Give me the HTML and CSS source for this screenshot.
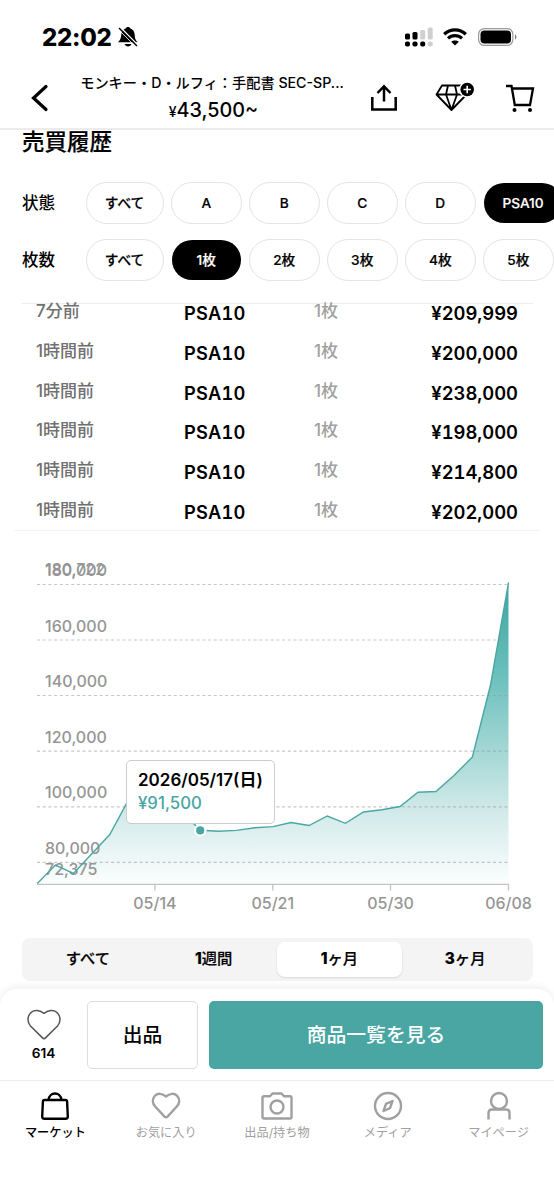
FILE: index.html
```
<!DOCTYPE html>
<html lang="ja">
<head>
    <meta charset="UTF-8">
    <meta name="viewport" content="width=device-width, initial-scale=1.0">
    <title>売買履歴</title>
    <link rel="stylesheet" href="styles.css">
</head>
<body>
    <!--Status bar-->
    <div class="status-bar">
        <span class="clock">22:02</span>
        <svg class="bell" width="22" height="22" viewBox="0 0 22 22">
            <path d="M1 16.200C3.500 14 4 12 4.300 8.500C4.600 5 6.400 3.100 8.600 2.400C9.300.4 12.700.4 13.400 2.400C16 3.200 17.600 5.500 17.700 9C17.800 12.500 18.500 14 20.500 16.200Z"/>
            <path d="M7.500 18H14.500C13.500 21.300 8.500 21.300 7.500 18Z"/>
            <path d="M3 1L21 19.300" stroke="#fff" stroke-width="1.400"/>
            <path d="M2 2L20 20" stroke="#000" stroke-width="1.400"/>
            <path d="M1 3L19 21" stroke="#fff" stroke-width="0.800"/>
        </svg>
        <svg class="signal" width="28" height="20" viewBox="0 0 28 20">
            <g fill="#000">
                <rect x="0" y="6.500" width="5" height="6" rx="1.500"/>
                <rect x="7.500" y="5" width="5" height="7.500" rx="1.500"/>
                <rect x="0" y="14.500" width="5" height="5" rx="1.800"/>
                <rect x="7.500" y="14.500" width="5" height="5" rx="1.800"/>
                <rect x="15.200" y="14.500" width="5" height="5" rx="1.800"/>
            </g>
            <g fill="#d0d0d0">
                <rect x="15.200" y="3" width="5" height="9.500" rx="1.500"/>
                <rect x="22.700" y="0.500" width="5" height="12" rx="1.500"/>
                <rect x="22.700" y="14.500" width="5" height="5" rx="1.800"/>
            </g>
        </svg>
        <svg class="wifi" width="24" height="18" viewBox="0 0 24 18" fill="none" stroke="#000">
            <path d="M1.200 6.200C7.200.4 16.800.4 22.800 6.200" stroke-width="3.300"/>
            <path d="M5 10.400C9 6.700 15 6.700 19 10.400" stroke-width="3.100"/>
            <path d="M12 17.600L8.200 13.800C10.200 12 13.800 12 15.800 13.800Z" fill="#000" stroke="none"/>
        </svg>
        <svg class="battery" width="40" height="18" viewBox="0 0 40 18">
            <rect x="0.600" y="0.600" width="34.300" height="16.800" rx="5.800" fill="none" stroke="#999" stroke-width="1.200"/>
            <rect x="2.500" y="2.500" width="30.500" height="13" rx="4" fill="#000"/>
            <path d="M37 6.500C39 7.500 39 10.500 37 11.500Z" fill="#777"/>
        </svg>
    </div>

    <!--Item header-->
    <header class="item-header">
        <svg class="back" width="20" height="30" viewBox="0 0 20 30" fill="none" stroke="#000" stroke-width="3.200" stroke-linecap="round">
            <path d="M16 4.500L3.500 16L16 27.500"/>
        </svg>
        <div class="item-title">
            <div class="item-name">モンキー・D・ルフィ：手配書 SEC-SP...</div>
            <div class="item-price"><span class="yen">¥</span>43,500~</div>
        </div>
        <svg class="share" width="28" height="28" viewBox="0 0 28 28" fill="none" stroke="#000" stroke-width="2.500">
            <path d="M2.300 14V26.500H25.700V14M14 18.500V4M7.500 10L14 3.300L20.500 10"/>
        </svg>
        <svg class="diamond" width="40" height="32" viewBox="0 0 40 32" fill="none" stroke="#000" stroke-width="1.800" stroke-linejoin="round">
            <path d="M7 4.500H26L31.500 13.500L16.500 29L1.500 13.500ZM2 13.500H31M13 4.500L11 13.500L16.500 29L22 13.500L20 4.500"/>
            <circle cx="32.200" cy="8.500" r="8.300" fill="#fff" stroke="none"/>
            <circle cx="32.200" cy="8.500" r="6.800" fill="#000" stroke="none"/>
            <path d="M32.200 4.800V12.200M28.500 8.500H35.900" stroke="#fff" stroke-width="1.600"/>
        </svg>
        <svg class="cart" width="30" height="30" viewBox="0 0 30 30" fill="none" stroke="#000" stroke-width="2.300">
            <path d="M1 4H6.500L9.800 23H25L28 6.500H7"/>
            <circle cx="9.500" cy="28" r="2" fill="#000" stroke="none"/>
            <circle cx="25" cy="28" r="2" fill="#000" stroke="none"/>
        </svg>
    </header>

    <main>
        <h2 class="section-title">売買履歴</h2>

        <!--Filters-->
        <div class="filter">
            <span class="filter-label">状態</span>
            <span class="chip chip-all">すべて</span>
            <span class="chip">A</span>
            <span class="chip">B</span>
            <span class="chip">C</span>
            <span class="chip">D</span>
            <span class="chip chip-psa selected">PSA10</span>
        </div>
        <div class="filter">
            <span class="filter-label">枚数</span>
            <span class="chip chip-all">すべて</span>
            <span class="chip chip-count selected">1枚</span>
            <span class="chip chip-count">2枚</span>
            <span class="chip chip-count">3枚</span>
            <span class="chip chip-count">4枚</span>
            <span class="chip chip-count">5枚</span>
        </div>

        <!--Sales history-->
        <div class="history">
            <div class="sale"><span class="time">7分前</span><span class="grade">PSA10</span><span class="count">1枚</span><span class="price">¥209,999</span></div>
            <div class="sale"><span class="time">1時間前</span><span class="grade">PSA10</span><span class="count">1枚</span><span class="price">¥200,000</span></div>
            <div class="sale"><span class="time">1時間前</span><span class="grade">PSA10</span><span class="count">1枚</span><span class="price">¥238,000</span></div>
            <div class="sale"><span class="time">1時間前</span><span class="grade">PSA10</span><span class="count">1枚</span><span class="price">¥198,000</span></div>
            <div class="sale"><span class="time">1時間前</span><span class="grade">PSA10</span><span class="count">1枚</span><span class="price">¥214,800</span></div>
            <div class="sale"><span class="time">1時間前</span><span class="grade">PSA10</span><span class="count">1枚</span><span class="price">¥202,000</span></div>
        </div>
        <div class="history-end"></div>

        <!--Price chart-->
        <div class="chart">
            <svg width="554" height="400" viewBox="0 531 554 400">
                <defs>
                    <linearGradient id="fade" x1="0" y1="0" x2="0" y2="1">
                        <stop offset="0" stop-color="#3da5a1"/>
                        <stop offset="0.300" stop-color="#69bfbb"/>
                        <stop offset="0.750" stop-color="#cfe9e8"/>
                        <stop offset="1" stop-color="#fcfefe"/>
                    </linearGradient>
                </defs>
                <path fill="url(#fade)" d="M37.300 883.500L55.400 865L73.500 873.500L91.600 854L109.800 834.500L127.900 801L146 780L164 785L182 812L200.400 830.300L218.500 831.200L236.600 830.400L254.800 827.700L273 826.600L291 822.500L309 825.500L327.300 816L345.400 823.300L363.500 812L382 809.700L400 806.500L418 792.300L436 791.500L454 775.500L472.400 757L490.500 685L508.500 582.500V884H37.300Z"/>
                <g class="grid">
                    <path d="M37 584.500H508M37 640H508M37 695.500H508M37 751.200H508M37 806.800H508M37 862.400H508"/>
                </g>
                <path class="axis" d="M37 884.300H509M154.900 884V890.500M272.800 884V890.500M390.500 884V890.500M508.500 884V890.500"/>
                <g class="y-label">
                    <text x="45" y="574.500">180,722</text>
                    <text x="45" y="576">180,000</text>
                    <text x="45" y="631.700">160,000</text>
                    <text x="45" y="687.200">140,000</text>
                    <text x="45" y="742.800">120,000</text>
                    <text x="45" y="798.400">100,000</text>
                    <text x="45" y="854">80,000</text>
                    <text x="45" y="875">72,375</text>
                </g>
                <g class="x-label">
                    <text x="154.900" y="909">05/14</text>
                    <text x="272.800" y="909">05/21</text>
                    <text x="390.500" y="909">05/30</text>
                    <text x="508.500" y="909">06/08</text>
                </g>
                <path class="line" d="M37.300 883.500L55.400 865L73.500 873.500L91.600 854L109.800 834.500L127.900 801L146 780L164 785L182 812L200.400 830.300L218.500 831.200L236.600 830.400L254.800 827.700L273 826.600L291 822.500L309 825.500L327.300 816L345.400 823.300L363.500 812L382 809.700L400 806.500L418 792.300L436 791.500L454 775.500L472.400 757L490.500 685L508.500 582.500"/>
                <circle cx="200.200" cy="830.400" r="5.200" fill="#4aa6a3" stroke="#fff" stroke-width="2.200"/>
            </svg>
            <div class="tooltip">
                <div class="tooltip-date">2026/05/17(日)</div>
                <div class="tooltip-price">¥91,500</div>
            </div>
        </div>

        <!--Period switch-->
        <div class="periods">
            <span class="period">すべて</span>
            <span class="period"><b>1</b>週間</span>
            <span class="period active"><b>1</b>ヶ月</span>
            <span class="period"><b>3</b>ヶ月</span>
        </div>
    </main>

    <!--Buy / sell bar-->
    <div class="action-bar">
        <div class="likes">
            <svg width="34" height="31" viewBox="0 0 34 31" fill="none" stroke="#555" stroke-width="1.500" stroke-linejoin="round">
                <path d="M17 4.300C12.500 1 6.800.2 3.500 4C.2 7.800.1 13.200 3.500 17L15.500 28.900Q17 30.300 18.500 28.900L30.500 17C33.900 13.200 33.800 7.800 30.500 4C27.200.2 21.500 1 17 4.300Z"/>
            </svg>
            <span>614</span>
        </div>
        <div class="sell-button">出品</div>
        <div class="list-button">商品一覧を見る</div>
    </div>

    <!--Tabs-->
    <nav class="tabs">
        <div class="tab current">
            <svg width="30" height="30" viewBox="0 0 30 30">
                <path d="M4.500 9H25.500Q27 9 27.100 10.500L27.800 25.500Q27.800 27.700 25.700 27.700H4.300Q2.200 27.700 2.200 25.500L2.900 10.500Q3 9 4.500 9ZM8.500 9C9.500 .4 20.500 .4 21.500 9"/>
            </svg>
            <span>マーケット</span>
        </div>
        <div class="tab">
            <svg width="30" height="30" viewBox="0 0 30 30">
                <path d="M15 5.500C11.500 2.500 6.500 1.600 3.700 5C1 8.300 1.300 12.500 4.200 15.500L13.500 25.600Q15 27 16.500 25.600L25.800 15.500C28.700 12.500 29 8.300 26.300 5C23.500 1.600 18.500 2.500 15 5.500Z"/>
            </svg>
            <span>お気に入り</span>
        </div>
        <div class="tab">
            <svg width="32" height="30" viewBox="0 0 32 30">
                <path d="M3 5.200H9L11.500 2.500H20.500L23 5.200H29Q30.500 5.200 30.500 6.700V26Q30.500 27.500 29 27.500H3Q1.500 27.500 1.500 26V6.700Q1.500 5.200 3 5.200Z"/>
                <circle cx="16" cy="16" r="6.500"/>
            </svg>
            <span>出品/持ち物</span>
        </div>
        <div class="tab">
            <svg width="30" height="30" viewBox="0 0 30 30">
                <circle cx="15" cy="15" r="13"/>
                <path d="M19.500 10L13 12.800L10.500 20L17 17.200Z"/>
            </svg>
            <span>メディア</span>
        </div>
        <div class="tab">
            <svg width="30" height="30" viewBox="0 0 30 30">
                <circle cx="15" cy="10" r="8"/>
                <path d="M4.500 28.500V22Q4.500 18.500 8 18.500H22Q25.500 18.500 25.500 22V28.500"/>
            </svg>
            <span>マイページ</span>
        </div>
    </nav>
</body>
</html>
```
FILE: styles.css
```
* {
    box-sizing: border-box;
}
body {
    margin: 0;
    width: 554px;
    height: 1200px;
    overflow: hidden;
    display: flex;
    flex-direction: column;
    background-color: #fff;
    color: #000;
    font-family: Inter, "Noto Sans CJK JP", sans-serif;
    font-optical-sizing: none;
}
svg {
    display: block;
    flex: none;
}
.status-bar {
    display: flex;
    align-items: center;
    height: 65px;
    padding: 10px 36px 0 42px;
}
.clock {
    width: 75px;
    font-size: 24px;
    font-weight: 800;
    letter-spacing: -0.3px;
    white-space: nowrap;
}
.signal {
    margin-left: auto;
}
.bell,
.signal,
.wifi,
.battery {
    margin-top: -1px;
}
.wifi {
    margin-left: 10px;
}
.battery {
    margin-left: 11px;
}
.item-header {
    display: flex;
    align-items: center;
    height: 65px;
    padding-left: 30px;
    border-bottom: 2px solid #ececec;
}
.item-title {
    width: 270px;
    margin-left: 27px;
    text-align: center;
    white-space: nowrap;
}
.item-name {
    height: 24px;
    line-height: 24px;
    font-size: 14.2px;
    font-weight: 500;
}
.item-price {
    height: 28px;
    padding-left: 3px;
    line-height: 30px;
    font-size: 19.8px;
    font-weight: 500;
}
.yen {
    font-size: 14px;
}
.share {
    margin-left: 23px;
}
.diamond {
    margin-left: 37px;
}
.cart {
    margin-left: 30px;
}
main {
    height: 859px;
}
.section-title {
    margin: 0;
    height: 52px;
    padding-left: 22px;
    line-height: 24px;
    font-size: 22.5px;
    font-weight: 500;
    -webkit-text-stroke: 0.2px;
}
.filter {
    display: flex;
    align-items: center;
    gap: 7.5px;
    height: 42px;
    margin-bottom: 15px;
    padding-left: 22px;
    overflow: hidden;
}
.filter-label {
    flex: none;
    width: 56px;
    padding-bottom: 2px;
    font-size: 16.5px;
    font-weight: 500;
}
.chip {
    flex: none;
    display: flex;
    align-items: center;
    justify-content: center;
    width: 70.5px;
    height: 42px;
    border: 1.5px solid #e4e4e4;
    border-radius: 21px;
    font-size: 13.7px;
    font-weight: 500;
    -webkit-text-stroke: 0.2px;
}
.chip-all {
    width: 78px;
    padding-bottom: 2px;
}
.chip-count {
    padding-bottom: 3px;
}
.chip-psa {
    width: 80px;
}
.selected {
    border-color: transparent;
    background-color: #000;
    background-clip: padding-box;
    color: #fff;
}
.history {
    height: 227px;
    margin: 22px 21px 0 22px;
    border-top: 1px solid #eee;
}
.sale {
    display: grid;
    grid-template-columns: 148px 130px 88px 1fr;
    height: 39.75px;
    padding: 0 15px 0 14px;
    line-height: 19px;
    white-space: nowrap;
}
.time {
    color: #707070;
    font-size: 17px;
    font-weight: 500;
    line-height: 15px;
}
.grade {
    font-size: 18.3px;
    font-weight: 600;
    letter-spacing: 0.2px;
    font-variant-numeric: tabular-nums;
}
.count {
    color: #a0a0a0;
    font-size: 17px;
    font-weight: 500;
    line-height: 15px;
}
.price {
    font-size: 18.4px;
    font-weight: 600;
    font-variant-numeric: tabular-nums;
    text-align: right;
}
.history-end {
    height: 1px;
    margin: 0 14px;
    background-color: #f3f3f3;
}
.chart {
    position: relative;
    height: 407px;
}
.grid {
    stroke: #999;
    stroke-opacity: 0.55;
    stroke-width: 1.2;
    stroke-dasharray: 3 2.7;
}
.axis {
    fill: none;
    stroke: #c4c4c4;
    stroke-width: 1.3;
}
.y-label,
.x-label {
    fill: #959595;
    font-size: 16px;
    font-weight: 500;
}
.x-label {
    text-anchor: middle;
}
.line {
    fill: none;
    stroke: #4aa6a3;
    stroke-width: 1.4;
}
.tooltip {
    position: absolute;
    left: 126px;
    top: 229px;
    width: 149px;
    height: 64px;
    padding: 8px 11px;
    border: 1.5px solid #ccc;
    border-radius: 5px;
    background-color: #fff;
    line-height: 23px;
    white-space: nowrap;
}
.tooltip-date {
    height: 23px;
    font-size: 17px;
    font-weight: 600;
}
.tooltip-price {
    height: 23px;
    color: #4aa6a3;
    font-size: 16.8px;
    font-weight: 500;
}
.periods {
    display: flex;
    height: 43px;
    margin: 0 21px 0 22px;
    padding: 4px 5px 4px 3px;
    border-radius: 8px;
    background-color: #f4f4f4;
}
.period {
    flex: 1;
    height: 35px;
    border-radius: 8px;
    font-size: 15.3px;
    font-weight: 500;
    line-height: 33px;
    text-align: center;
    -webkit-text-stroke: 0.2px;
}
.period b {
    font-weight: 800;
}
.active {
    background-color: #fff;
    box-shadow: 0 1px 2px rgba(0, 0, 0, 0.12);
}
.action-bar {
    position: relative;
    display: flex;
    height: 91px;
    padding: 12px 11px 11px 0;
    border-radius: 17px 17px 0 0;
    background-color: #fff;
    box-shadow: 0 -2px 8px rgba(0, 0, 0, 0.07);
}
.likes {
    display: flex;
    flex-direction: column;
    align-items: center;
    width: 87px;
    padding-top: 8px;
    font-size: 13.7px;
    font-weight: 600;
    line-height: 27px;
}
.sell-button,
.list-button {
    display: flex;
    align-items: center;
    justify-content: center;
    padding-bottom: 3px;
    border-radius: 5px;
    font-size: 19.8px;
    font-weight: 500;
}
.sell-button {
    width: 111px;
    margin-right: 11px;
    border: 1.5px solid #ddd;
}
.list-button {
    flex: 1;
    background-color: #4aa6a3;
    color: #fff;
}
.tabs {
    position: relative;
    display: flex;
    height: 120px;
    border-top: 1.5px solid #ececec;
    background-color: #fff;
}
.tab {
    flex: 1;
    display: flex;
    flex-direction: column;
    align-items: center;
    padding-top: 10px;
    color: #a0a0a0;
    font-size: 12.2px;
    line-height: 24px;
}
.tab svg {
    fill: none;
    stroke: currentColor;
    stroke-width: 2.4;
    stroke-linejoin: round;
}
.current {
    color: #000;
    font-weight: 500;
}
```
